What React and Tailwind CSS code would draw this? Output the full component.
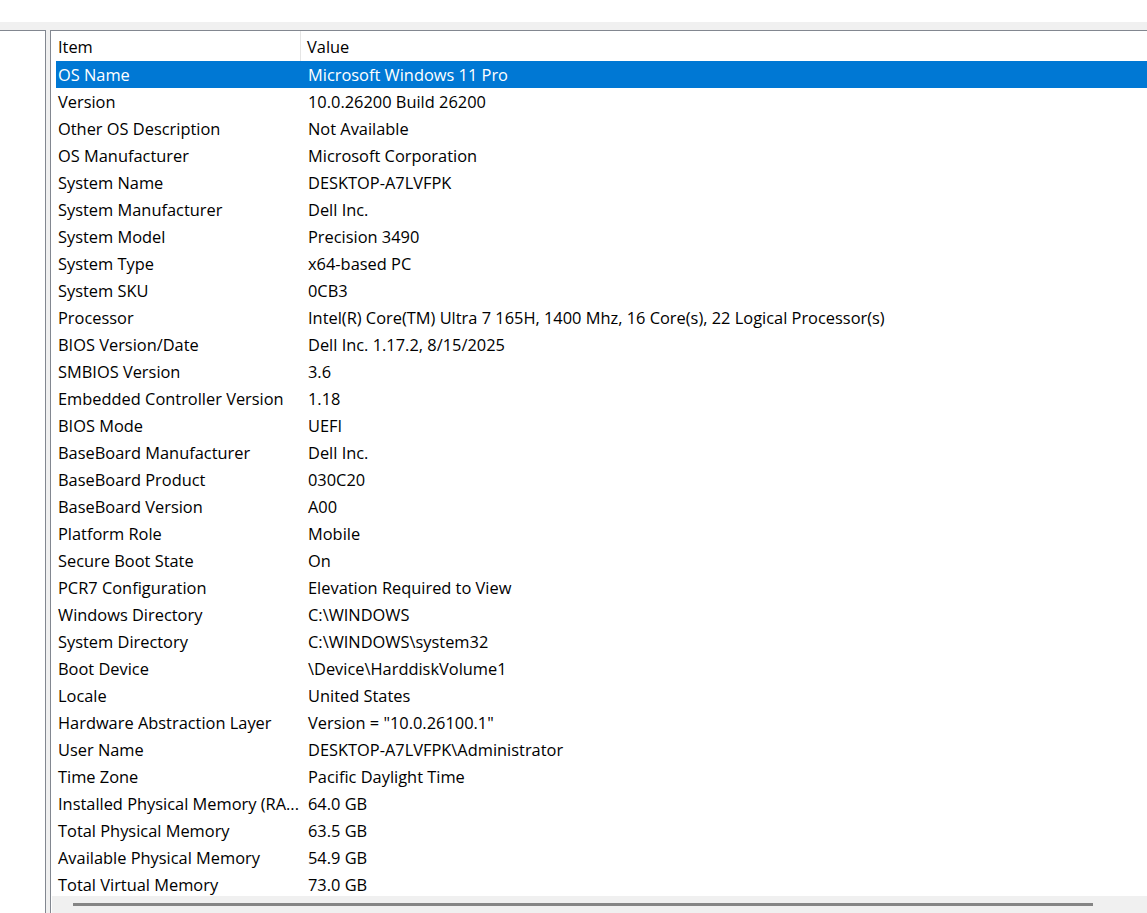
import React from 'react';

const rows = [
  ['OS Name', 'Microsoft Windows 11 Pro'],
  ['Version', '10.0.26200 Build 26200'],
  ['Other OS Description', 'Not Available'],
  ['OS Manufacturer', 'Microsoft Corporation'],
  ['System Name', 'DESKTOP-A7LVFPK'],
  ['System Manufacturer', 'Dell Inc.'],
  ['System Model', 'Precision 3490'],
  ['System Type', 'x64-based PC'],
  ['System SKU', '0CB3'],
  ['Processor', 'Intel(R) Core(TM) Ultra 7 165H, 1400 Mhz, 16 Core(s), 22 Logical Processor(s)'],
  ['BIOS Version/Date', 'Dell Inc. 1.17.2, 8/15/2025'],
  ['SMBIOS Version', '3.6'],
  ['Embedded Controller Version', '1.18'],
  ['BIOS Mode', 'UEFI'],
  ['BaseBoard Manufacturer', 'Dell Inc.'],
  ['BaseBoard Product', '030C20'],
  ['BaseBoard Version', 'A00'],
  ['Platform Role', 'Mobile'],
  ['Secure Boot State', 'On'],
  ['PCR7 Configuration', 'Elevation Required to View'],
  ['Windows Directory', 'C:\\WINDOWS'],
  ['System Directory', 'C:\\WINDOWS\\system32'],
  ['Boot Device', '\\Device\\HarddiskVolume1'],
  ['Locale', 'United States'],
  ['Hardware Abstraction Layer', 'Version = "10.0.26100.1"'],
  ['User Name', 'DESKTOP-A7LVFPK\\Administrator'],
  ['Time Zone', 'Pacific Daylight Time'],
  ['Installed Physical Memory (RA...', '64.0 GB'],
  ['Total Physical Memory', '63.5 GB'],
  ['Available Physical Memory', '54.9 GB'],
  ['Total Virtual Memory', '73.0 GB'],
];

export default function App() {
  return (
    <div className="w-[1147px] h-[913px] overflow-hidden bg-white flex flex-col text-[16.4px] text-black" style={{ fontFamily: '"Open Sans", "Noto Sans", sans-serif' }}>
      {/* top strip */}
      <div className="h-[22px] bg-white flex-shrink-0" />
      <div className="flex-1 flex bg-[#f0f0f0] pt-[8px] min-h-0">
        {/* left tree pane */}
        <div className="w-[46px] bg-white border-t border-r border-[#828790] flex-shrink-0" />
        <div className="w-[4px] flex-shrink-0" />
        {/* right list pane */}
        <div className="flex-1 bg-white border-t border-l border-[#828790] flex flex-col min-h-0">
          <div className="flex-1 min-h-0 overflow-hidden pl-[5px]">
            {/* header */}
            <div className="h-[30px] flex items-center">
              <div className="w-[245px] pl-[2px] h-full flex items-center border-r border-[#e5e5e5] pt-[2px]">Item</div>
              <div className="pl-[6px] pt-[2px]">Value</div>
            </div>
            {rows.map(([item, value], i) => (
              <div
                key={item}
                className={`h-[27px] flex items-center pt-[2px] whitespace-nowrap ${i === 0 ? 'bg-[#0078d4] text-white' : ''}`}
              >
                <div className="w-[250px] pl-[2px] overflow-hidden">{item}</div>
                <div className="pl-[2px]">{value}</div>
              </div>
            ))}
          </div>
          {/* horizontal scrollbar */}
          <div className="h-[17px] bg-[#f0f0f0] flex items-center pl-[21px] flex-shrink-0 ml-[1px]">
            <div className="w-[1020px] h-[3px] bg-[#858585]" />
          </div>
        </div>
      </div>
    </div>
  );
}
